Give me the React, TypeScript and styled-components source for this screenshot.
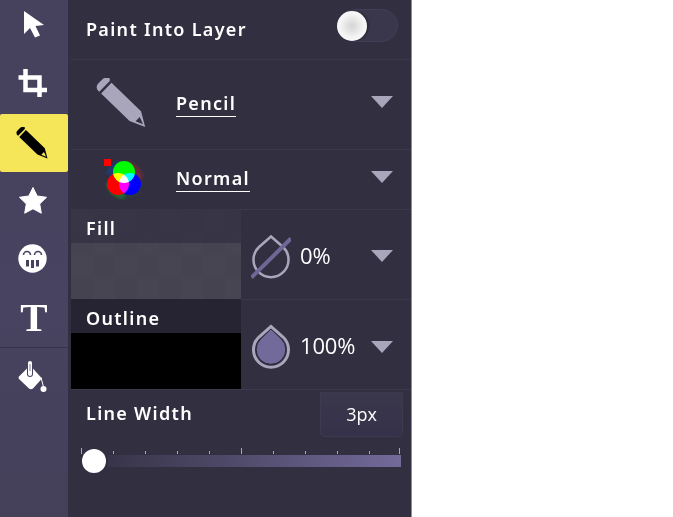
import React from "react";
import styled, { createGlobalStyle } from "styled-components";

const TEXT_FONT = `"Noto Sans", Lato, sans-serif`;
const NUM_FONT = `"Open Sans", "Noto Sans", sans-serif`;
const MUTED = "#a9a6bc";
const ROW_LINE = "#3c394c";

const GlobalStyle = createGlobalStyle`
  html, body {
    margin: 0;
    height: 100%;
    background: #fff;
  }
  #root {
    height: 100%;
  }
`;

const Shell = styled.div`
  display: flex;
  width: 412px;
  height: 517px;
  overflow: hidden;
  box-sizing: border-box;
  border-right: 1px solid #8f8aaa;
  background: #322f41;
`;

const Sidebar = styled.nav`
  width: 68px;
  flex-shrink: 0;
  display: flex;
  flex-direction: column;
  background: linear-gradient(to bottom, #46425d, #474360 60%, #44405a);
`;

const ToolButton = styled.div<{ $h: number; $active?: boolean; $divided?: boolean; $pad?: string }>`
  height: ${(p) => p.$h}px;
  box-sizing: border-box;
  padding: ${(p) => p.$pad ?? "0"};
  display: flex;
  align-items: center;
  justify-content: center;
  color: ${(p) => (p.$active ? "#000" : "#fff")};
  background: ${(p) => (p.$active ? "#f4e658" : "transparent")};
  border-radius: ${(p) => (p.$active ? "2px" : "0")};
  border-bottom: ${(p) => (p.$divided ? "1px solid #36334a" : "none")};
`;

const SerifT = styled.span`
  font-family: "Liberation Serif", serif;
  font-weight: 700;
  font-size: 41px;
  line-height: 1;
  color: #fff;
`;

const Panel = styled.div`
  flex: 1;
  display: flex;
  flex-direction: column;
  padding-left: 3px;
  min-width: 0;
`;

const Row = styled.div<{ $h: number }>`
  height: ${(p) => p.$h}px;
  box-sizing: border-box;
  display: flex;
  align-items: center;
  border-bottom: 1px solid ${ROW_LINE};
  flex-shrink: 0;
`;

const Label = styled.span`
  font-family: ${TEXT_FONT};
  font-size: 18px;
  font-weight: 600;
  letter-spacing: 1.3px;
  color: #fff;
`;

const ToggleRow = styled(Row)`
  justify-content: space-between;
  padding: 0 13px 0 15px;
`;

const ToggleLabel = styled(Label)`
  margin-bottom: 2px;
`;

const ToggleTrack = styled.div`
  width: 60px;
  height: 33px;
  margin-bottom: 9px;
  box-sizing: border-box;
  border-radius: 17px;
  border: 1px solid #413e55;
  background: #3a374d;
  display: flex;
  align-items: center;
`;

const ToggleThumb = styled.div`
  width: 30px;
  height: 30px;
  margin: 1px 0 0 -2px;
  border-radius: 50%;
  background: radial-gradient(circle, #d4d4d4 0%, #f4f4f4 55%, #fff 100%);
  box-shadow: 2px 0 2px rgba(30, 28, 40, 0.5);
`;

const IconSlot = styled.div<{ $pad?: string }>`
  width: 105px;
  box-sizing: border-box;
  padding: ${(p) => p.$pad ?? "0"};
  flex-shrink: 0;
  display: flex;
  justify-content: center;
`;

const SelectValue = styled(Label)`
  display: inline-block;
  border-bottom: 1px solid #fff;
  line-height: 24px;
  padding-bottom: 1px;
  margin-bottom: 2px;
`;

const Caret = styled.div<{ $top?: number; $bottom?: number }>`
  margin: ${(p) => p.$top ?? 0}px 18px ${(p) => p.$bottom ?? 0}px auto;
  width: 0;
  height: 0;
  border-left: 11.5px solid transparent;
  border-right: 11.5px solid transparent;
  border-top: 12px solid ${MUTED};
  flex-shrink: 0;
`;

const Swatch = styled.div<{ $outline?: boolean }>`
  width: 170px;
  height: calc(100% + 1px);
  margin-top: -1px;
  align-self: flex-start;
  flex-shrink: 0;
  background: ${(p) =>
    p.$outline
      ? "#000"
      : "repeating-conic-gradient(#484553 0% 25%, #464350 0% 50%) 0 24px / 44px 44px"};
`;

const SwatchLabel = styled.div<{ $outline?: boolean }>`
  height: 34px;
  box-sizing: border-box;
  padding: 3px 0 0 15px;
  display: flex;
  align-items: center;
  background: ${(p) => (p.$outline ? "#262433" : "rgba(50, 47, 65, 0.72)")};
`;

const OpacityGroup = styled.div`
  flex: 1;
  display: flex;
  align-items: center;
  padding-left: 10px;
`;

const DropSvg = styled.svg`
  margin-top: 2px;
  flex-shrink: 0;
`;

const Percent = styled.span`
  font-family: ${NUM_FONT};
  font-size: 22px;
  font-weight: 500;
  color: #fff;
  margin: 0 0 0 9px;
  letter-spacing: -0.2px;
`;

const WidthSection = styled.div`
  flex: 1;
  display: flex;
  flex-direction: column;
  padding: 2px 8px 0 10px;
`;

const WidthHead = styled.div`
  display: flex;
  align-items: flex-start;
  justify-content: space-between;
  padding-left: 5px;
`;

const WidthLabel = styled(Label)`
  margin-top: 9px;
`;

const WidthBox = styled.div`
  width: 83px;
  height: 45px;
  box-sizing: border-box;
  border: 1px solid #3e3b50;
  border-top: none;
  border-radius: 0 0 5px 5px;
  background: linear-gradient(to bottom, #3b384c, #34314a 100%);
  display: flex;
  align-items: center;
  justify-content: center;
  font-family: ${NUM_FONT};
  font-size: 18px;
  font-weight: 500;
  color: #fff;
`;

const Slider = styled.div`
  position: relative;
  margin-top: 11px;
  height: 25px;
  margin-right: 2px;
`;

const Track = styled.div`
  position: absolute;
  left: 27px;
  right: 0;
  top: 7px;
  height: 12px;
  background: linear-gradient(to right, #38354a, #4b4663 35%, #736a9a);
`;

const Tick = styled.div<{ $big: boolean }>`
  position: absolute;
  top: ${(p) => (p.$big ? 0 : 3)}px;
  width: 1px;
  height: ${(p) => (p.$big ? 6 : 3)}px;
  background: #a9a6bc;
`;

const Thumb = styled.div`
  position: absolute;
  left: 1px;
  top: 1px;
  width: 24px;
  height: 24px;
  border-radius: 50%;
  background: #fff;
`;

const BlendCircle = styled.circle`
  mix-blend-mode: screen;
`;

const ArrowIcon = () => (
  <svg width="21" height="27" viewBox="0 0 21 27">
    <path d="M0 0L20 14L11.500 15L16 24.500L11 26.500L6 17L0 23Z" fill="currentColor" />
  </svg>
);

const CropIcon = () => (
  <svg width="32" height="28" viewBox="0 0 32 28" fill="none" stroke="currentColor" strokeWidth="4.500">
    <path d="M0.500 8.500H21.500V28" />
    <path d="M7.500 0V21H29" />
  </svg>
);

const PencilIcon = ({ size, color }: { size: number; color: string }) => (
  <svg width={size} height={size} viewBox="0 0 50 50">
    <g transform="translate(6 6) rotate(44)" fill={color}>
      <path d="M3.500 -7.500A4 7.500 0 0 0 -3 -3.500V2A5 5 0 0 0 2 7.500H3.500Z" />
      <path
        fillRule="evenodd"
        d="M6 -7.500H47L61 1L45.500 7.500H6ZM50 -2.500L50 3.500L57.500 0.500Z"
      />
    </g>
  </svg>
);

const StarIcon = () => (
  <svg width="28" height="27" viewBox="0 0 28 27">
    <path
      d="M14 0.500L18.200 9L27.500 10.300L20.700 16.900L22.300 26.200L14 21.800L5.700 26.200L7.300 16.900L0.500 10.300L9.800 9Z"
      fill="currentColor"
      stroke="currentColor"
      strokeLinejoin="round"
    />
  </svg>
);

const GrinIcon = () => (
  <svg width="29" height="29" viewBox="0 0 29 29">
    <circle cx="14.500" cy="14.500" r="14.200" fill="#fff" />
    <path d="M5.500 11a3.500 3.500 0 0 1 7 0M16.500 11a3.500 3.500 0 0 1 7 0" fill="none" stroke="#46425d" strokeWidth="1.600" />
    <path d="M9.500 16V22.500M14.500 16V24M19.500 16V22.500" stroke="#46425d" strokeWidth="3" />
  </svg>
);

const BucketIcon = () => (
  <svg width="30" height="33" viewBox="0 0 30 33">
    <path d="M9.500 7L1 15.500Q0 17 1 18L11 27.500Q13 29 15 27.500L24 17.500L14.500 7Z" fill="#fff" />
    <path d="M12 2V13" stroke="#46425d" strokeWidth="6" strokeLinecap="round" />
    <path d="M12 2V13" stroke="#fff" strokeWidth="4" strokeLinecap="round" />
    <path d="M12 3V10" stroke="#a9a6bc" strokeWidth="1.500" />
    <path d="M23 16.500L25.500 26" stroke="#fff" strokeWidth="1" />
    <circle cx="25.500" cy="28" r="3" fill="#fff" />
  </svg>
);

const RgbIcon = () => (
  <svg width="40" height="41" viewBox="0 0 40 41">
    <defs>
      <filter id="halo" x="-20%" y="-20%" width="140%" height="140%">
        <feGaussianBlur stdDeviation="1.500" />
      </filter>
    </defs>
    <g filter="url(#halo)">
      <path d="M20 21L2 15A19 19 0 0 1 17 2Z" fill="#1d3a7a" />
      <path d="M20 21L23 2A19 19 0 0 1 39 20Z" fill="#6a2a3a" />
      <path d="M20 21L38 24A19 19 0 0 1 20 40Z" fill="#2a3a3a" />
      <path d="M20 21L20 40A19 19 0 0 1 2 24Z" fill="#206a30" />
    </g>
    <rect x="0" y="0" width="7" height="7" fill="#f00" />
    <g style={{ isolation: "isolate" }}>
      <BlendCircle cx="20" cy="13" r="11" fill="#0f0" />
      <BlendCircle cx="14" cy="25" r="11" fill="#f00" />
      <BlendCircle cx="26" cy="25" r="11" fill="#00f" />
    </g>
  </svg>
);

const DROP = "M20 3.500L8 14A17.500 17.500 0 1 0 32 14Z";

const DropIcon = ({ empty }: { empty?: boolean }) => (
  <DropSvg width="40" height="46" viewBox="0 0 40 46" fill="none">
    {empty ? (
      <>
        <path d={DROP} stroke={MUTED} strokeWidth="2.500" />
        <path d="M0.500 44.500L40 5.500" stroke="#6f6896" strokeWidth="4" />
      </>
    ) : (
      <>
        <path d={DROP} stroke={MUTED} strokeWidth="3" fill="#322f41" />
        <path d="M20 6L9.500 16A14.850 14.850 0 1 0 30.500 16Z" fill="#726a9a" stroke="#2a2838" strokeWidth="1" />
      </>
    )}
  </DropSvg>
);

const TICKS = [0, 32, 64, 96, 128, 160, 192, 224, 256, 288, 318];

const App: React.FC = () => {
  return (
    <>
      <GlobalStyle />
      <Shell>
        <Sidebar>
          <ToolButton $h={57} $pad="0 0 9px 0">
            <ArrowIcon />
          </ToolButton>
          <ToolButton $h={57} $pad="0 0 5px 0">
            <CropIcon />
          </ToolButton>
          <ToolButton $h={58} $active $pad="0 4px 0 0">
            <PencilIcon size={32} color="#000" />
          </ToolButton>
          <ToolButton $h={57} $pad="0 3px 0 0">
            <StarIcon />
          </ToolButton>
          <ToolButton $h={58} $pad="0 3px 0 0">
            <GrinIcon />
          </ToolButton>
          <ToolButton $h={61} $divided>
            <SerifT>T</SerifT>
          </ToolButton>
          <ToolButton $h={58} $pad="0 3px 0 0">
            <BucketIcon />
          </ToolButton>
        </Sidebar>
        <Panel>
          <ToggleRow $h={60}>
            <ToggleLabel>Paint Into Layer</ToggleLabel>
            <ToggleTrack>
              <ToggleThumb />
            </ToggleTrack>
          </ToggleRow>
          <Row $h={90}>
            <IconSlot $pad="0 5px 4px 0">
              <PencilIcon size={50} color={MUTED} />
            </IconSlot>
            <SelectValue>Pencil</SelectValue>
            <Caret $bottom={5} />
          </Row>
          <Row $h={60}>
            <IconSlot>
              <RgbIcon />
            </IconSlot>
            <SelectValue>Normal</SelectValue>
            <Caret $bottom={5} />
          </Row>
          <Row $h={90}>
            <Swatch>
              <SwatchLabel>
                <Label>Fill</Label>
              </SwatchLabel>
            </Swatch>
            <OpacityGroup>
              <DropIcon empty />
              <Percent>0%</Percent>
              <Caret $top={2} />
            </OpacityGroup>
          </Row>
          <Row $h={90}>
            <Swatch $outline>
              <SwatchLabel $outline>
                <Label>Outline</Label>
              </SwatchLabel>
            </Swatch>
            <OpacityGroup>
              <DropIcon />
              <Percent>100%</Percent>
              <Caret $top={4} />
            </OpacityGroup>
          </Row>
          <WidthSection>
            <WidthHead>
              <WidthLabel>Line Width</WidthLabel>
              <WidthBox>3px</WidthBox>
            </WidthHead>
            <Slider>
              <Track />
              {TICKS.map((x, i) => (
                <Tick key={x} $big={i === 0 || i === 5 || i === 10} style={{ left: x }} />
              ))}
              <Thumb />
            </Slider>
          </WidthSection>
        </Panel>
      </Shell>
    </>
  );
};

export default App;
